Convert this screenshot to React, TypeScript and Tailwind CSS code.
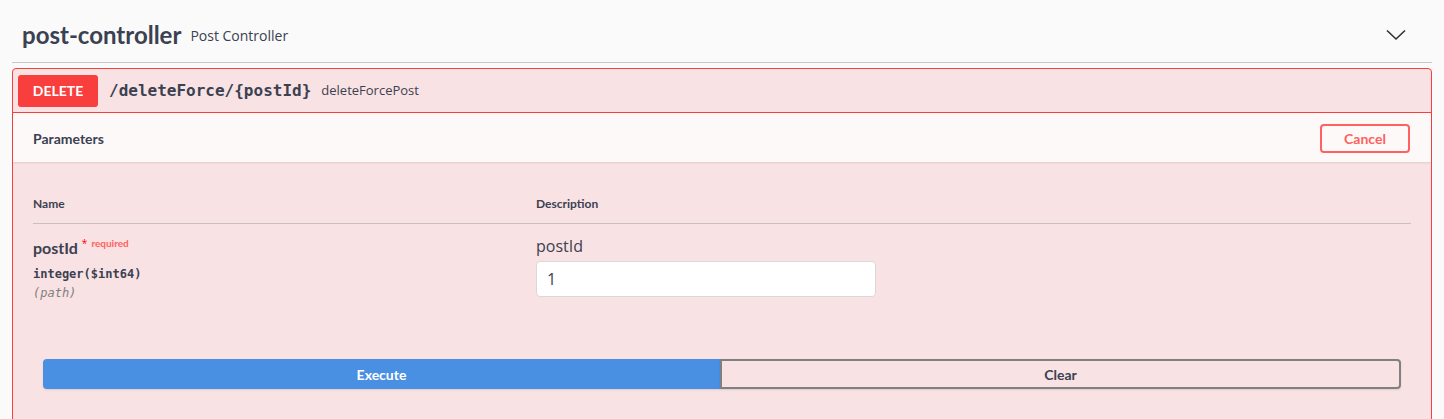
const heading = "font-['Lato','Noto_Sans',sans-serif]";
const body = "font-['Open_Sans','Noto_Sans',sans-serif]";
const mono = "font-['DejaVu_Sans_Mono','Liberation_Mono',monospace]";

function Chevron() {
  return (
    <svg width="20" height="12" viewBox="0 0 20 12" className="text-[#303030]">
      <polyline points="1,1.5 10,10 19,1.5" fill="none" stroke="currentColor" strokeWidth="1.6" />
    </svg>
  );
}

export default function App() {
  return (
    <div className={`h-[419px] w-full overflow-hidden bg-[#fafafa] ${body}`}>
      <div className="px-3">
        <div className="flex h-[63px] items-center border-b border-[#c8c8c8] pl-[10px] pr-[26px] pt-[8px]">
          <h3 className={`text-[24px] font-bold text-[#3b4151] ${heading}`}>post-controller</h3>
          <span className="ml-[9px] mt-[1px] text-[14px] text-[#3b4151]">Post Controller</span>
          <div className="ml-auto">
            <Chevron />
          </div>
        </div>

        <div className="mt-[5px] rounded-[4px] border border-[#f93e3e] bg-[#f9e2e3] pb-[60px]">
          <div className="flex h-[44px] items-center border-b border-[#f93e3e] px-[5px]">
            <span
              className={`flex h-[32px] w-[80px] items-center justify-center rounded-[3px] bg-[#f93e3e] text-[14px] font-bold text-white ${heading}`}
            >
              DELETE
            </span>
            <span className={`ml-[11px] text-[16px] font-bold text-[#3b4151] ${mono}`}>
              /deleteForce/&#8203;{"{postId}"}
            </span>
            <span className="ml-[10px] text-[13px] text-[#3b4151]">deleteForcePost</span>
          </div>

          <div className="flex h-[49px] items-center bg-[#fdf9f9] pl-[20px] pr-[21px] pt-[2px] shadow-[0_1px_2px_rgba(0,0,0,0.1)]">
            <h4 className={`text-[14px] font-bold text-[#3b4151] ${heading}`}>Parameters</h4>
            <button
              className={`ml-auto h-[29px] w-[90px] rounded-[4px] border-2 border-[#ff6060] bg-transparent text-[14px] font-bold text-[#ff6060] ${heading}`}
            >
              Cancel
            </button>
          </div>

          <div className="px-[20px] pt-[31px]">
            <div className="flex h-[31px] items-center border-b border-[#cbbec0] pb-[12px] pt-[3px]">
              <div className={`w-[503px] text-[12px] font-bold text-[#3b4151] ${heading}`}>Name</div>
              <div className={`text-[12px] font-bold text-[#3b4151] ${heading}`}>Description</div>
            </div>

            <div className="flex pt-[12px]">
              <div className="w-[503px]">
                <div className="flex items-start pt-[1px]">
                  <span className={`text-[16px] font-bold leading-[22px] text-[#3b4151] ${heading}`}>postId</span>
                  <span className="ml-[4px] mt-[-1px] text-[10px] text-[#ff0000]">*</span>
                  <span className={`ml-[4px] mt-[-1px] text-[10px] font-bold text-[#ff6060] ${heading}`}>
                    required
                  </span>
                </div>
                <div className={`mt-[6px] text-[12px] font-semibold text-[#3b4151] ${mono}`}>integer($int64)</div>
                <div className={`mt-[1px] text-[12px] italic text-[#808080] ${mono}`}>(path)</div>
              </div>
              <div>
                <div className="text-[16px] leading-[20px] text-[#3b4151]">postId</div>
                <input
                  defaultValue="1"
                  className="mt-[5px] h-[36px] w-[340px] rounded-[4px] border border-[#d9d9d9] bg-white px-[10px] text-[16px] text-[#3b4151] outline-none"
                />
              </div>
            </div>
          </div>

          <div className="flex px-[30px] pt-[57px]">
            <button
              className={`h-[30px] flex-1 rounded-l-[4px] bg-[#4990e2] text-[14px] font-bold text-white shadow-[0_1px_2px_rgba(0,0,0,0.1)] ${heading}`}
            >
              Execute
            </button>
            <button
              className={`h-[30px] flex-1 rounded-r-[4px] border-2 border-[#808080] bg-transparent text-[14px] font-bold text-[#3b4151] shadow-[0_1px_2px_rgba(0,0,0,0.1)] ${heading}`}
            >
              Clear
            </button>
          </div>
        </div>
      </div>
    </div>
  );
}
